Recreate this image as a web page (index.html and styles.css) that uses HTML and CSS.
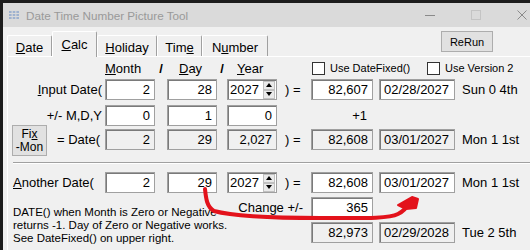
FILE: index.html
```html
<!DOCTYPE html>
<html>
<head>
<meta charset="utf-8">
<title>Date Time Number Picture Tool</title>
<link rel="stylesheet" href="styles.css">
</head>
<body>
<div class="window">
  <div class="titlebar">
    <svg class="app-icon" viewBox="0 0 10 8">
      <rect x="0" y="0" width="2.6" height="2" fill="#9fb2cf"/><rect x="3.7" y="0" width="2.6" height="2" fill="#9fb2cf"/><rect x="7.4" y="0" width="2.6" height="2" fill="#9fb2cf"/>
      <rect x="0" y="3" width="2.6" height="2" fill="#9fb2cf"/><rect x="3.7" y="3" width="2.6" height="2" fill="#9fb2cf"/><rect x="7.4" y="3" width="2.6" height="2" fill="#9fb2cf"/>
      <rect x="0" y="6" width="2.6" height="2" fill="#9fb2cf"/><rect x="3.7" y="6" width="2.6" height="2" fill="#9fb2cf"/><rect x="7.4" y="6" width="2.6" height="2" fill="#9fb2cf"/>
    </svg>
    <span class="title">Date Time Number Picture Tool</span>
    <div class="controls">
      <span class="ctl"><svg viewBox="0 0 10 10"><line x1="0" y1="5.5" x2="10" y2="5.5" stroke="#8a8a8a" stroke-width="1"/></svg></span>
      <span class="ctl"><svg viewBox="0 0 10 10"><rect x="0.5" y="0.5" width="9" height="9" fill="none" stroke="#c4c4c4" stroke-width="1"/></svg></span>
      <span class="ctl"><svg viewBox="0 0 10 10"><path d="M0.5 0.5 L9.5 9.5 M9.5 0.5 L0.5 9.5" stroke="#8a8a8a" stroke-width="1"/></svg></span>
    </div>
  </div>
  <div class="client">
    <div class="tabrow">
      <div class="tab w-date"><span><u>D</u>ate</span></div>
      <div class="tab w-calc active"><span><u>C</u>alc</span></div>
      <div class="tab w-hol"><span><u>H</u>oliday</span></div>
      <div class="tab w-time"><span>Tim<u>e</u></span></div>
      <div class="tab w-num"><span>N<u>u</u>mber</span></div>
      <div class="btn rerun">ReRun</div>
    </div>
    <div class="panel">
      <div class="cols hdr">
        <span class="c-mon"><u>M</u>onth</span>
        <span class="slash c-s1">/</span>
        <span class="c-day pl12"><u>D</u>ay</span>
        <span class="slash c-s2">/</span>
        <span class="c-year pl10"><u>Y</u>ear</span>
        <div class="checks">
          <span class="chkitem first"><span class="chk"></span><span class="chklbl">Use DateFixed()</span></span>
          <span class="chkitem"><span class="chk"></span><span class="chklbl">Use Version 2</span></span>
        </div>
      </div>

      <div class="cols row r1">
        <span class="lbl c-label"><u>I</u>nput Date(</span>
        <span class="box c-mon">2</span>
        <span class="box c-day">28</span>
        <span class="box yearbox c-year"><span>2027</span><span class="spin"><span class="sb up"></span><span class="sb down"></span></span></span>
        <span class="paren c-par">) =</span>
        <span class="box c-ser">82,607</span>
        <span class="box l c-date">02/28/2027</span>
        <span class="dtxt c-txt">Sun 0 4th</span>
      </div>

      <div class="cols row r2">
        <span class="lbl c-label">+/- M,D,Y</span>
        <span class="box c-mon">0</span>
        <span class="box c-day">1</span>
        <span class="box c-year">0</span>
        <span class="plain c-ser">+1</span>
      </div>

      <div class="cols row r3">
        <span class="c-label fixcell"><span class="fixbtn">Fi<u>x</u><br>-Mon</span><span>= Date(</span></span>
        <span class="box dis c-mon">2</span>
        <span class="box dis c-day">29</span>
        <span class="box dis c-year">2,027</span>
        <span class="paren c-par">) =</span>
        <span class="box dis c-ser">82,608</span>
        <span class="box dis l c-date">03/01/2027</span>
        <span class="dtxt c-txt">Mon 1 1st</span>
      </div>

      <div class="sep"></div>

      <div class="cols row r4">
        <span class="lbl left c-label"><u>A</u>nother Date(</span>
        <span class="box c-mon">2</span>
        <span class="box c-day">29</span>
        <span class="box yearbox c-year"><span>2027</span><span class="spin"><span class="sb up"></span><span class="sb down"></span></span></span>
        <span class="paren c-par">) =</span>
        <span class="box c-ser">82,608</span>
        <span class="box l c-date">03/01/2027</span>
        <span class="dtxt c-txt">Mon 1 1st</span>
      </div>

      <div class="cols lower">
        <p class="note">DATE() when Month is Zero or Negative<br>returns -1. Day of Zero or Negative works.<br>See DateFixed() on upper right.</p>
        <span class="change">Change +/-</span>
        <span class="box c-ser rowa">365</span>
        <span class="box dis c-ser rowb">82,973</span>
        <span class="box dis l c-date rowb">02/29/2028</span>
        <span class="dtxt c-txt rowb">Tue 2 5th</span>
      </div>
    </div>
  </div>
</div>
<svg class="annot" viewBox="0 0 530 250" width="530" height="250">
  <path d="M205 189 C206 199 207 207 214 211 C232 216 270 218 320 218 C360 218 388 219 398 214 C404 211 407 207 409 203" fill="none" stroke="#e3121b" stroke-width="4" stroke-linecap="round"/>
  <polygon points="398,205 412,197 418,199 416,208 406,209" fill="#e3121b" stroke="#e3121b" stroke-width="2" stroke-linejoin="round"/>
</svg>
</body>
</html>
```
FILE: styles.css
```css
* { box-sizing: border-box; }
html, body { margin: 0; }
body {
  width: 530px;
  height: 250px;
  overflow: hidden;
  background: #1c1c1c;
  padding: 3px 0 0 3px;
  position: relative;
  font-family: "Liberation Sans", Arial, sans-serif;
  color: #000;
}
.window {
  width: 542px;
  height: 247px;
  overflow: hidden;
  background: #f0f0f0;
}
.titlebar {
  height: 24px;
  background: #dadada;
  display: flex;
  align-items: center;
  padding-left: 6px;
}
.app-icon { width: 10px; height: 8px; margin-right: 7px; }
.title { font-size: 11.7px; color: #999; }
.controls { margin-left: auto; display: flex; height: 100%; }
.ctl { width: 46px; display: flex; align-items: center; justify-content: center; }
.ctl svg { width: 10px; height: 10px; }

.client { padding: 4px 0 0 4px; }
.tabrow {
  display: flex;
  align-items: flex-end;
  height: 25px;
  position: relative;
  z-index: 1;
}
.tab {
  height: 21px;
  font-size: 13px;
  display: flex;
  align-items: center;
  justify-content: center;
  padding-top: 2px;
  background: #f0f0f0;
  border-top: 1px solid #fff;
  border-left: 1px solid #fff;
  border-right: 1px solid #a0a0a0;
  border-radius: 2px 2px 0 0;
}
.tab.active { height: 26px; margin-bottom: -1px; padding-top: 0; }
.w-date { width: 45px; }
.w-calc { width: 45px; }
.w-hol { width: 60px; }
.w-time { width: 45px; }
.w-num { width: 66px; }
.btn {
  background: #e1e1e1;
  border: 1px solid #adadad;
  font-size: 11px;
  display: flex;
  align-items: center;
  justify-content: center;
  text-align: center;
}
.rerun { align-self: flex-start; margin-left: 173px; width: 52px; height: 21px; }

.panel {
  border-top: 1px solid #fff;
  border-left: 1px solid #fff;
  height: 200px;
}
.cols {
  display: grid;
  grid-template-columns: 97px 50px 12px 50px 10px 50px 34px 62px 6px 76px 1fr;
  align-items: center;
  font-size: 13px;
}
.c-label { grid-column: 1; }
.c-mon { grid-column: 2; }
.c-s1 { grid-column: 3; }
.c-day { grid-column: 4; }
.c-s2 { grid-column: 5; }
.c-year { grid-column: 6; }
.c-par { grid-column: 7; }
.c-ser { grid-column: 8; }
.c-date { grid-column: 10; }
.c-txt { grid-column: 11; }
.pl12 { padding-left: 12px; }
.pl10 { padding-left: 10px; }
.hdr { height: 22px; }
.slash { font-weight: bold; text-align: center; }
.checks { grid-column: 8 / -1; display: flex; align-items: center; padding-left: 1px; }
.chkitem { display: flex; align-items: center; gap: 5px; }
.chkitem.first { width: 115px; }
.chk { width: 13px; height: 13px; border: 1px solid #333; background: #fff; }
.chklbl { font-size: 11px; }

.row { height: 21px; }
.r2 { margin-top: 5px; }
.r3 { margin-top: 3px; }
.r4 { margin-top: 8px; }
.lbl { text-align: right; padding-right: 3px; }
.lbl.left { text-align: left; padding-left: 5px; padding-right: 0; }
.box {
  height: 21px;
  border: 1px solid #a0a0a0;
  box-shadow: inset 1px 1px 0 #7a7a7a;
  background: #fff;
  line-height: 19px;
  text-align: right;
  padding-right: 4px;
  white-space: nowrap;
}
.box.dis { background: #f0f0f0; }
.box.l { text-align: left; padding-left: 4px; padding-right: 0; }
.yearbox {
  display: flex;
  justify-content: space-between;
  align-items: center;
  padding: 0 1px 0 2px;
}
.spin { display: flex; flex-direction: column; width: 12px; height: 18px; }
.sb {
  height: 9px;
  background: #eaeaea;
  border: 1px solid #c0c0c0;
  display: flex;
  align-items: center;
  justify-content: center;
}
.sb::before { content: ""; width: 0; height: 0; border-left: 3px solid transparent; border-right: 3px solid transparent; }
.sb.up::before { border-bottom: 4px solid #000; }
.sb.down::before { border-top: 4px solid #000; }
.paren { padding-left: 8px; }
.plain { text-align: right; padding-right: 6px; }
.dtxt { padding-left: 7px; white-space: nowrap; }
.fixcell {
  display: flex;
  justify-content: space-between;
  align-items: center;
  padding: 0 5px 0 4px;
}
.fixbtn {
  display: block;
  width: 35px;
  height: 31px;
  margin: -4px 0 -6px;
  padding-top: 2px;
  background: #e1e1e1;
  border: 1px solid #adadad;
  font-size: 12px;
  line-height: 13px;
  text-align: center;
}
.sep {
  margin: 12px 0 0 5px;
  height: 2px;
  border-top: 1px solid #a0a0a0;
  border-bottom: 1px solid #fff;
}
.lower {
  margin-top: 4px;
  grid-template-rows: 21px 21px;
  row-gap: 4px;
}
.note {
  grid-column: 1 / 6;
  grid-row: 1 / 3;
  align-self: start;
  margin: 9px 0 0 5px;
  height: 37px;
  font-size: 11.5px;
  line-height: 13px;
  white-space: nowrap;
}
.change { grid-column: 6 / 8; grid-row: 1; text-align: right; padding-right: 8px; white-space: nowrap; }
.rowa { grid-row: 1; }
.rowb { grid-row: 2; }
.annot { position: absolute; left: 0; top: 0; pointer-events: none; }
```
